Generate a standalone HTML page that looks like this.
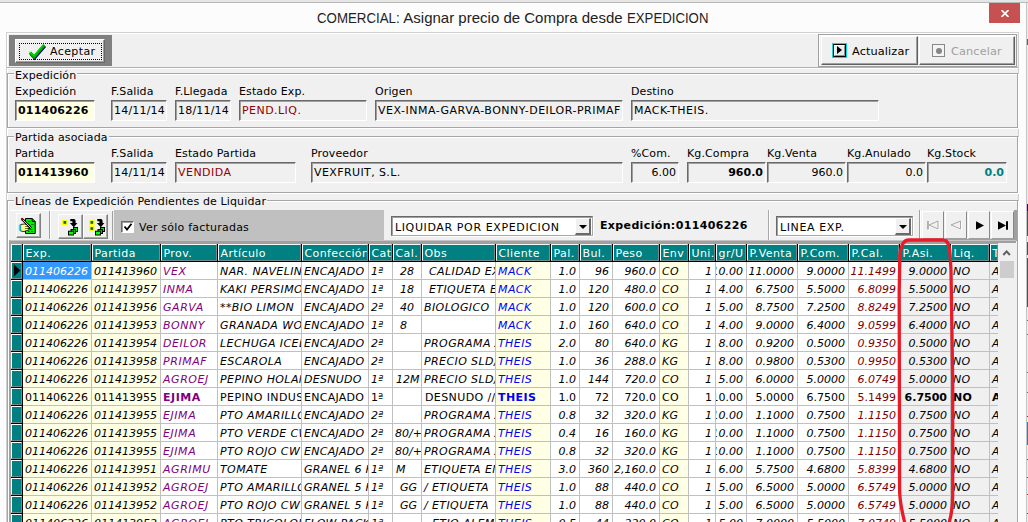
<!DOCTYPE html>
<html lang="es"><head><meta charset="utf-8"><title>COMERCIAL: Asignar precio de Compra desde EXPEDICION</title>
<style>
html,body{margin:0;padding:0}
body{width:1028px;height:522px;overflow:hidden;position:relative;background:#fcfcfc;font-family:"DejaVu Sans","Liberation Sans",sans-serif;font-size:11px;color:#000}
div,span{box-sizing:border-box}
.a{position:absolute}
.t{position:absolute;white-space:pre;line-height:14px;height:14px;letter-spacing:0.12px}
.fld{position:absolute;height:21px;background:#f0f0f0;border:1px solid;border-color:#696969 #fff #fff #696969;box-shadow:inset 1px 1px 0 #a0a0a0;white-space:pre;overflow:hidden;line-height:17px;padding:1px 0 0 2px}
.fld.y{background:#ffffe1;font-weight:bold;padding-left:2px;letter-spacing:0.2px}
.fld.r{text-align:right;padding-right:2px}
.grp{position:absolute;border:1px solid #a6a6a6;box-shadow:1px 1px 0 #fff, inset 1px 1px 0 #fff}
.cap{position:absolute;background:#f0f0f0;line-height:14px;height:14px;white-space:pre;letter-spacing:0.12px}
.btn{position:absolute;background:#f0f0f0;border:1px solid;border-color:#fff #696969 #696969 #fff;box-shadow:inset -1px -1px 0 #a0a0a0}
.hc{position:absolute;top:244px;height:17px;background:#008080;color:#fff;border-left:1px solid #f0f8f8;border-top:1px solid #f0f8f8;border-right:1px solid #708c8c;border-bottom:1px solid #708c8c;white-space:pre;overflow:hidden;line-height:15px;padding-left:1.5px;padding-top:1px;letter-spacing:0.4px}
.ri{position:absolute;left:11px;width:11px;height:17px;background:#008080;border-left:1px solid #fff;border-top:1px solid #fff;border-right:1px solid #708c8c;border-bottom:1px solid #708c8c}
.c{position:absolute;height:17px;line-height:17px;padding-top:1px;white-space:pre;overflow:hidden;font-style:italic;padding-left:2px;display:flex}
.c.r{justify-content:flex-end;padding-left:0;padding-right:3px}
.c.n{font-style:normal}
.c.b{font-weight:bold}
</style></head><body>

<div class="a" style="left:0;top:0;width:1028px;height:2px;background:#e6e6e6"></div>
<div class="a" style="left:0;top:2px;width:1028px;height:1px;background:#b9b9b9"></div>
<div class="a" style="left:1026px;top:3px;width:1px;height:519px;background:#c4c4c4"></div><div class="a" style="left:1027px;top:3px;width:1px;height:519px;background:#ececec"></div>
<div class="a" style="left:317px;top:6px;height:24px;line-height:24px;font-family:'Liberation Sans',sans-serif;font-size:15px;color:#222;white-space:pre"><span class="a" style="left:0;top:0;transform-origin:0 0;transform:scaleX(0.885)">COMERCIAL:</span><span class="a" style="left:83px;top:0"> Asignar precio de Compra desde </span><span class="a" style="left:310px;top:0;transform-origin:0 0;transform:scaleX(0.88)">EXPEDICION</span></div>
<div class="a" style="left:989px;top:3px;width:31px;height:20px;background:#c75050"><svg class="a" style="left:12px;top:7px" width="8" height="7" viewBox="0 0 8 7"><path d="M0.500 0 L7.500 7 M7.500 0 L0.500 7" stroke="#fff" stroke-width="1.700" fill="none"/></svg></div>
<div class="a" style="left:6px;top:32px;width:1013px;height:490px;background:#f0f0f0;border-left:1px solid #d0d0d0;border-top:1px solid #d0d0d0;border-right:1px solid #d0d0d0;box-shadow:inset 1px 1px 0 #fff"></div>
<div class="a" style="left:7px;top:67px;width:1011px;height:1px;background:#b0b0b0"></div>
<div class="a" style="left:7px;top:68px;width:1011px;height:1px;background:#fff"></div>
<div class="a" style="left:9px;top:35px;width:103px;height:31px;background:#808080"></div>
<div class="btn" style="left:15px;top:39px;width:90px;height:24px;border-color:#fff #696969 #696969 #fff"></div>
<div class="a" style="left:19px;top:43px;width:83px;height:17px;border:1px dotted #000"></div>
<svg class="a" style="left:28px;top:42px" width="20" height="20" viewBox="0 0 20 20"><path d="M2.600 11.400 L6.500 15.900 L16.900 3.900" stroke="#000080" stroke-width="3" fill="none"/><path d="M2 10.500 L6 15 L16.200 3" stroke="#00a800" stroke-width="3" fill="none"/><path d="M1.500 10 L6 13.800 L15.500 2.500" stroke="#00f000" stroke-width="1" fill="none"/></svg>
<div class="t" style="left:50px;top:45px;font-size:11px;letter-spacing:0.4px">Aceptar</div>
<div class="a" style="left:818px;top:34px;width:199px;height:33px;border:1px solid #a0a0a0;box-shadow:inset 1px 1px 0 #fff"></div>
<div class="btn" style="left:821px;top:36px;width:97px;height:29px;border-width:1px;border-color:#fff #606060 #606060 #fff;box-shadow:inset -1px -1px 0 #a0a0a0"></div>
<div class="btn" style="left:919px;top:36px;width:96px;height:29px;border-width:1px;border-color:#fff #606060 #606060 #fff;box-shadow:inset -1px -1px 0 #a0a0a0"></div>
<div class="a" style="left:832px;top:43px;width:15px;height:15px;border:1px solid #00e0e0;background:#000"><div class="a" style="left:1px;top:1px;width:11px;height:11px;background:#ececec;border:1px solid;border-color:#fff #909090 #909090 #fff"></div><div class="a" style="left:4px;top:2px;width:0;height:0;border-left:5px solid #000;border-top:4.5px solid transparent;border-bottom:4.5px solid transparent"></div></div>
<div class="t" style="left:852px;top:45px;font-size:11.3px">Actualizar</div>
<div class="a" style="left:932px;top:44px;width:13px;height:13px;border:1px solid #888;background:#f4f4f4"><div class="a" style="left:2.500px;top:2.500px;width:6px;height:6px;border-radius:3px;background:#858585"></div></div>
<div class="t" style="left:951px;top:45px;font-size:11.3px;color:#a0a0a0">Cancelar</div>
<div class="grp" style="left:7px;top:73px;width:1011px;height:55px"></div>
<div class="cap" style="left:14px;top:69px;padding:0 1px">Expedición</div>
<div class="t" style="left:15px;top:85px">Expedición</div>
<div class="t" style="left:111px;top:85px">F.Salida</div>
<div class="t" style="left:175px;top:85px">F.Llegada</div>
<div class="t" style="left:239px;top:85px">Estado Exp.</div>
<div class="t" style="left:375px;top:85px">Origen</div>
<div class="t" style="left:631px;top:85px">Destino</div>
<div class="fld y" style="left:15px;top:100px;width:80px">011406226</div>
<div class="fld" style="left:111px;top:100px;width:56px;padding-left:2px;letter-spacing:0.2px">14/11/14</div>
<div class="fld" style="left:175px;top:100px;width:56px;padding-left:2px;letter-spacing:0.2px">18/11/14</div>
<div class="fld" style="left:239px;top:100px;width:128px;color:#900000;letter-spacing:0.45px">PEND.LIQ.</div>
<div class="fld" style="left:375px;top:100px;width:248px;letter-spacing:0.5px">VEX-INMA-GARVA-BONNY-DEILOR-PRIMAF</div>
<div class="fld" style="left:631px;top:100px;width:248px;letter-spacing:0.5px">MACK-THEIS.</div>
<div class="grp" style="left:7px;top:136px;width:1011px;height:57px"></div>
<div class="cap" style="left:14px;top:131px;padding:0 1px">Partida asociada</div>
<div class="t" style="left:15px;top:147px">Partida</div>
<div class="t" style="left:111px;top:147px">F.Salida</div>
<div class="t" style="left:175px;top:147px">Estado Partida</div>
<div class="t" style="left:311px;top:147px">Proveedor</div>
<div class="t" style="left:631px;top:147px">%Com.</div>
<div class="t" style="left:687px;top:147px">Kg.Compra</div>
<div class="t" style="left:767px;top:147px">Kg.Venta</div>
<div class="t" style="left:847px;top:147px">Kg.Anulado</div>
<div class="t" style="left:927px;top:147px">Kg.Stock</div>
<div class="fld y" style="left:15px;top:162px;width:80px">011413960</div>
<div class="fld" style="left:111px;top:162px;width:56px;padding-left:2px;letter-spacing:0.2px">14/11/14</div>
<div class="fld" style="left:175px;top:162px;width:121px;color:#900000;letter-spacing:0.45px">VENDIDA</div>
<div class="fld" style="left:311px;top:162px;width:312px;letter-spacing:0.4px">VEXFRUIT, S.L.</div>
<div class="fld r" style="left:631px;top:162px;width:48px">6.00</div>
<div class="fld r" style="left:687px;top:162px;width:79px;font-weight:bold">960.0</div>
<div class="fld r" style="left:767px;top:162px;width:79px">960.0</div>
<div class="fld r" style="left:847px;top:162px;width:79px">0.0</div>
<div class="fld r" style="left:927px;top:162px;width:80px;font-weight:bold;color:#008080">0.0</div>
<div class="grp" style="left:7px;top:200px;width:1011px;height:330px"></div>
<div class="cap" style="left:14px;top:195px;padding:0 1px;letter-spacing:0.13px">Líneas de Expedición Pendientes de Liquidar</div>
<div class="a" style="left:10px;top:210px;width:103px;height:1px;background:#fff"></div><div class="a" style="left:112px;top:211px;width:1px;height:29px;background:#a0a0a0"></div>
<div class="a" style="left:113.500px;top:210px;width:270px;height:30px;background:#c0c0c0"></div>
<div class="a" style="left:49px;top:211px;width:1px;height:28px;background:#a0a0a0"></div><div class="a" style="left:50px;top:211px;width:1px;height:28px;background:#fff"></div>
<div class="btn" style="left:16px;top:213px;width:25px;height:25px;border-width:1px;border-color:#fff #808080 #808080 #fff;box-shadow:inset -1px -1px 0 #a8a8a8"></div>
<div class="btn" style="left:58px;top:214px;width:25px;height:25px;border-width:1px;border-color:#fff #808080 #808080 #fff;box-shadow:inset -1px -1px 0 #a8a8a8"></div>
<div class="btn" style="left:83px;top:214px;width:25px;height:25px;border-width:1px;border-color:#fff #808080 #808080 #fff;box-shadow:inset -1px -1px 0 #a8a8a8"></div>
<svg class="a" style="left:18px;top:216px" width="19" height="19" viewBox="0 0 19 19"><path d="M7.500 2.500 H14.200 L17.200 5.500 V17.500 H7.500 Z" fill="#00f000" stroke="#000" stroke-width="1"/><path d="M14.200 2.500 V5.500 H17.200" fill="none" stroke="#000" stroke-width="1"/><path d="M10 5.500 H12.500 M13 8.500 H15.500 M12 13.500 H14.500 M10 15.500 H11.500 M13 15.500 H15" stroke="#007000" stroke-width="1"/><path d="M2.600 8.500 L6.500 8 L9 8.300 L11.800 9.300 L11.800 10.300 L9.500 10.600 L12 11.300 L12 12.300 L9.500 12.500 L11.200 13.200 L10.800 14.200 L8.600 14.500 L6 15.600 L2.600 15 Z" fill="#ffff88" stroke="#000" stroke-width="0.800"/><path d="M7 10.500 H9.500 M7 12.500 H9.500" stroke="#404000" stroke-width="0.700"/><rect x="0.800" y="8.600" width="1.800" height="6.200" fill="#00e8ff"/><path d="M3.600 2.600 L13 12" stroke="#000" stroke-width="2.400"/><path d="M4.600 3.600 L12.800 11.800" stroke="#f8e800" stroke-width="1"/><path d="M3.300 2.300 L4.800 3.800" stroke="#e00000" stroke-width="1.400"/></svg>
<svg class="a" style="left:61.8px;top:218px" width="18" height="18" viewBox="0 0 18 18"><rect x="0" y="1.700" width="5.500" height="5.300" fill="#ffff00"/><rect x="1.500" y="3" width="2.700" height="2.800" fill="#007000"/><path d="M8.300 1 H11.800 Q13.600 1 13.600 3 V5 H15.400 L11.800 9.200 L7.800 5 H10.400 V3.200 H8.300 Z" fill="#000"/><rect x="11.500" y="9.500" width="4" height="4" fill="#00e800" stroke="#000" stroke-width="1"/><rect x="9" y="11.500" width="4.500" height="4" fill="#00c000" stroke="#000" stroke-width="1"/><rect x="6.500" y="13.200" width="5" height="3.800" fill="#00ff00" stroke="#000" stroke-width="1"/></svg>
<svg class="a" style="left:88.8px;top:218px" width="18" height="18" viewBox="0 0 18 18"><rect x="0" y="1.700" width="5.500" height="5.300" fill="#ffff00"/><rect x="1.500" y="3" width="2.700" height="2.800" fill="#007000"/><rect x="0" y="8" width="5.500" height="5" fill="#ffff00"/><rect x="1.500" y="9.200" width="2.700" height="2.700" fill="#007000"/><path d="M8.300 1 H11.800 Q13.600 1 13.600 3 V5 H15.400 L11.800 9.200 L7.800 5 H10.400 V3.200 H8.300 Z" fill="#000"/><rect x="11.500" y="9.500" width="4" height="4" fill="#00e800" stroke="#000" stroke-width="1"/><rect x="9" y="11.500" width="4.500" height="4" fill="#00c000" stroke="#000" stroke-width="1"/><rect x="6.500" y="13.200" width="5" height="3.800" fill="#00ff00" stroke="#000" stroke-width="1"/></svg>
<div class="a" style="left:121px;top:221px;width:13px;height:12px;background:#fff;border:1px solid;border-color:#696969 #fff #fff #696969;box-shadow:inset 1px 1px 0 #a0a0a0"><svg class="a" style="left:1px;top:0px" width="10" height="10" viewBox="0 0 10 10"><path d="M1.5 4.5 L4 7.5 L8.5 1.8" stroke="#000" stroke-width="1.8" fill="none"/></svg></div>
<div class="t" style="left:139px;top:221px;letter-spacing:0.22px">Ver sólo facturadas</div>
<div class="a" style="left:391px;top:216px;width:202px;height:20px;background:#fff;border:1px solid;border-color:#696969 #a8a8a8 #a8a8a8 #696969;box-shadow:inset 1px 1px 0 #a0a0a0, 1px 1px 0 #fff;white-space:pre;line-height:17px;padding:2px 0 0 3px;letter-spacing:0.62px;overflow:hidden">LIQUIDAR POR EXPEDICION<div class="btn" style="right:1px;top:1px;width:16px;height:17px;border-width:1px 2px 2px 1px;box-shadow:none"><div class="a" style="left:3px;top:6px;width:0;height:0;border-top:4px solid #000;border-left:4px solid transparent;border-right:4px solid transparent"></div></div></div>
<div class="t" style="left:600px;top:219px;font-weight:bold;letter-spacing:0.36px">Expedición:011406226</div>
<div class="a" style="left:768px;top:210px;width:1px;height:30px;background:#a8a8a8"></div><div class="a" style="left:769px;top:210px;width:1px;height:30px;background:#fff"></div>
<div class="a" style="left:776px;top:216px;width:137px;height:20px;background:#fff;border:1px solid;border-color:#696969 #a8a8a8 #a8a8a8 #696969;box-shadow:inset 1px 1px 0 #a0a0a0, 1px 1px 0 #fff;white-space:pre;line-height:17px;padding:2px 0 0 3px;letter-spacing:0.62px;overflow:hidden">LINEA EXP.<div class="btn" style="right:1px;top:1px;width:16px;height:17px;border-width:1px 2px 2px 1px;box-shadow:none"><div class="a" style="left:3px;top:6px;width:0;height:0;border-top:4px solid #000;border-left:4px solid transparent;border-right:4px solid transparent"></div></div></div>
<div class="btn" style="left:922px;top:211px;width:22px;height:28px;border-width:1px;border-color:#fff #888 #a0a0a0 #fff;box-shadow:none"></div>
<div class="btn" style="left:945px;top:211px;width:22px;height:28px;border-width:1px;border-color:#fff #888 #a0a0a0 #fff;box-shadow:none"></div>
<div class="btn" style="left:968px;top:211px;width:22px;height:28px;border-width:1px;border-color:#fff #888 #a0a0a0 #fff;box-shadow:none"></div>
<div class="btn" style="left:991px;top:211px;width:23px;height:28px;border-width:1px;border-color:#fff #888 #a0a0a0 #fff;box-shadow:none"></div>
<div class="a" style="left:919px;top:210px;width:98px;height:31px;border-left:1px solid #a0a0a0;border-right:3px solid #a0a0a0;border-bottom:2px solid #a0a0a0"></div><div class="a" style="left:920px;top:210px;width:1px;height:29px;background:#fff"></div>
<svg class="a" style="left:921px;top:211px" width="94" height="28" viewBox="0 0 94 28"><path d="M8 11 V19.500" stroke="#fff" stroke-width="1.6"/><path d="M18 11 L9 15 L18 19 Z" fill="none" stroke="#fff" stroke-width="1"/><path d="M7 10 V18.500" stroke="#a0a0a0" stroke-width="1.6"/><path d="M17 10 L8 14 L17 18 Z" fill="#f0f0f0" stroke="#a8a8a8" stroke-width="1"/><path d="M40.500 11 L31 15 L40.500 19 Z" fill="none" stroke="#fff" stroke-width="1"/><path d="M39.500 10 L30 14 L39.500 18 Z" fill="#f0f0f0" stroke="#a8a8a8" stroke-width="1"/><path d="M55 10.200 L63 14.500 L55 18.800 Z" fill="#000"/><path d="M77 10.200 L85 14.500 L77 18.800 Z" fill="#000"/><path d="M86 10.200 V18.800" stroke="#000" stroke-width="2"/></svg>
<div class="a" style="left:9px;top:240px;width:1007px;height:290px;background:#fff;border-left:2px solid #a0a0a0;border-top:1px solid #c4c4c4"></div>
<div class="a" style="left:9px;top:241px;width:1007px;height:3px;background:#a0a0a0"></div>
<div class="a" style="left:11px;top:244px;width:987px;height:18px;background:#000"></div>
<div class="hc" style="left:11px;width:11px;padding:0"></div>
<div class="hc" style="left:23px;width:68px">Exp.</div>
<div class="hc" style="left:92px;width:68px">Partida</div>
<div class="hc" style="left:161px;width:56px">Prov.</div>
<div class="hc" style="left:218px;width:83px">Artículo</div>
<div class="hc" style="left:302px;width:66px">Confección</div>
<div class="hc" style="left:369px;width:23px">Cat</div>
<div class="hc" style="left:393px;width:28px">Cal.</div>
<div class="hc" style="left:422px;width:73px">Obs</div>
<div class="hc" style="left:496px;width:54px">Cliente</div>
<div class="hc" style="left:551px;width:28px">Pal.</div>
<div class="hc" style="left:580px;width:32px">Bul.</div>
<div class="hc" style="left:613px;width:46px">Peso</div>
<div class="hc" style="left:660px;width:28px">Env</div>
<div class="hc" style="left:689px;width:26px">Uni.</div>
<div class="hc" style="left:716px;width:30px">gr/U</div>
<div class="hc" style="left:747px;width:50px">P.Venta</div>
<div class="hc" style="left:798px;width:50px">P.Com.</div>
<div class="hc" style="left:849px;width:50px">P.Cal.</div>
<div class="hc" style="left:900px;width:50px">P.Asi.</div>
<div class="hc" style="left:951px;width:38px">Liq.</div>
<div class="hc" style="left:990px;width:8px">T</div>
<div class="a" style="left:11px;top:261px;width:12px;height:19px;background:#000"></div>
<div class="ri" style="top:262px"></div>
<div class="a" style="left:23px;top:279px;width:975px;height:1px;background:#c0c0c0"></div>
<div class="c" style="left:23px;top:262px;width:68px;background:#3399ff;color:#fff;"><span>011406226</span></div>
<div class="c" style="left:92px;top:262px;width:68px;background:#ffffe6;"><span>011413960</span></div>
<div class="c" style="left:161px;top:262px;width:56px;color:#800080;letter-spacing:0.55px;"><span>VEX</span></div>
<div class="c" style="left:218px;top:262px;width:83px;letter-spacing:0.4px;"><span>NAR. NAVELINA</span></div>
<div class="c" style="left:302px;top:262px;width:66px;letter-spacing:0.27px;"><span>ENCAJADO</span></div>
<div class="c" style="left:369px;top:262px;width:23px;"><span>1ª</span></div>
<div class="c" style="left:393px;top:262px;width:28px;padding-left:7px;"><span>28</span></div>
<div class="c" style="left:422px;top:262px;width:73px;padding-left:7px;letter-spacing:0.4px;"><span>CALIDAD EXTRA</span></div>
<div class="c" style="left:496px;top:262px;width:54px;background:#ffffe6;color:#0000ff;letter-spacing:0.4px;"><span>MACK</span></div>
<div class="c r" style="left:551px;top:262px;width:28px;"><span>1.0</span></div>
<div class="c r" style="left:580px;top:262px;width:32px;"><span>96</span></div>
<div class="c r" style="left:613px;top:262px;width:46px;"><span>960.0</span></div>
<div class="c" style="left:660px;top:262px;width:28px;background:#ffffe6;letter-spacing:0.3px;"><span>CO</span></div>
<div class="c r" style="left:689px;top:262px;width:26px;"><span>1</span></div>
<div class="c r" style="left:716px;top:262px;width:30px;"><span>10.00</span></div>
<div class="c r" style="left:747px;top:262px;width:50px;"><span>11.0000</span></div>
<div class="c r" style="left:798px;top:262px;width:50px;"><span>9.0000</span></div>
<div class="c r" style="left:849px;top:262px;width:50px;color:#800000;"><span>11.1499</span></div>
<div class="c r" style="left:900px;top:262px;width:50px;background:#f0f0f0;"><span>9.0000</span></div>
<div class="c" style="left:951px;top:262px;width:38px;background:#f0f0f0;letter-spacing:0.3px;"><span>NO</span></div>
<div class="c" style="left:990px;top:262px;width:8px;background:#f0f0f0;"><span>A</span></div>
<div class="a" style="left:11px;top:279px;width:12px;height:19px;background:#000"></div>
<div class="ri" style="top:280px"></div>
<div class="a" style="left:23px;top:297px;width:975px;height:1px;background:#c0c0c0"></div>
<div class="c" style="left:23px;top:280px;width:68px;background:#ffffe6;"><span>011406226</span></div>
<div class="c" style="left:92px;top:280px;width:68px;background:#ffffe6;"><span>011413957</span></div>
<div class="c" style="left:161px;top:280px;width:56px;color:#800080;letter-spacing:0.55px;"><span>INMA</span></div>
<div class="c" style="left:218px;top:280px;width:83px;letter-spacing:0.4px;"><span>KAKI PERSIMON</span></div>
<div class="c" style="left:302px;top:280px;width:66px;letter-spacing:0.27px;"><span>ENCAJADO</span></div>
<div class="c" style="left:369px;top:280px;width:23px;"><span>1ª</span></div>
<div class="c" style="left:393px;top:280px;width:28px;padding-left:7px;"><span>18</span></div>
<div class="c" style="left:422px;top:280px;width:73px;padding-left:7px;letter-spacing:0.4px;"><span>ETIQUETA EN</span></div>
<div class="c" style="left:496px;top:280px;width:54px;background:#ffffe6;color:#0000ff;letter-spacing:0.4px;"><span>MACK</span></div>
<div class="c r" style="left:551px;top:280px;width:28px;"><span>1.0</span></div>
<div class="c r" style="left:580px;top:280px;width:32px;"><span>120</span></div>
<div class="c r" style="left:613px;top:280px;width:46px;"><span>480.0</span></div>
<div class="c" style="left:660px;top:280px;width:28px;background:#ffffe6;letter-spacing:0.3px;"><span>CO</span></div>
<div class="c r" style="left:689px;top:280px;width:26px;"><span>1</span></div>
<div class="c r" style="left:716px;top:280px;width:30px;"><span>4.00</span></div>
<div class="c r" style="left:747px;top:280px;width:50px;"><span>6.7500</span></div>
<div class="c r" style="left:798px;top:280px;width:50px;"><span>5.5000</span></div>
<div class="c r" style="left:849px;top:280px;width:50px;color:#800000;"><span>6.8099</span></div>
<div class="c r" style="left:900px;top:280px;width:50px;background:#f0f0f0;"><span>5.5000</span></div>
<div class="c" style="left:951px;top:280px;width:38px;background:#f0f0f0;letter-spacing:0.3px;"><span>NO</span></div>
<div class="c" style="left:990px;top:280px;width:8px;background:#f0f0f0;"><span>A</span></div>
<div class="a" style="left:11px;top:297px;width:12px;height:19px;background:#000"></div>
<div class="ri" style="top:298px"></div>
<div class="a" style="left:23px;top:315px;width:975px;height:1px;background:#c0c0c0"></div>
<div class="c" style="left:23px;top:298px;width:68px;background:#ffffe6;"><span>011406226</span></div>
<div class="c" style="left:92px;top:298px;width:68px;background:#ffffe6;"><span>011413956</span></div>
<div class="c" style="left:161px;top:298px;width:56px;color:#800080;letter-spacing:0.55px;"><span>GARVA</span></div>
<div class="c" style="left:218px;top:298px;width:83px;letter-spacing:0.4px;"><span>**BIO LIMON</span></div>
<div class="c" style="left:302px;top:298px;width:66px;letter-spacing:0.27px;"><span>ENCAJADO</span></div>
<div class="c" style="left:369px;top:298px;width:23px;"><span>2ª</span></div>
<div class="c" style="left:393px;top:298px;width:28px;padding-left:7px;"><span>40</span></div>
<div class="c" style="left:422px;top:298px;width:73px;letter-spacing:0.4px;"><span>BIOLOGICO</span></div>
<div class="c" style="left:496px;top:298px;width:54px;background:#ffffe6;color:#0000ff;letter-spacing:0.4px;"><span>MACK</span></div>
<div class="c r" style="left:551px;top:298px;width:28px;"><span>1.0</span></div>
<div class="c r" style="left:580px;top:298px;width:32px;"><span>120</span></div>
<div class="c r" style="left:613px;top:298px;width:46px;"><span>600.0</span></div>
<div class="c" style="left:660px;top:298px;width:28px;background:#ffffe6;letter-spacing:0.3px;"><span>CO</span></div>
<div class="c r" style="left:689px;top:298px;width:26px;"><span>1</span></div>
<div class="c r" style="left:716px;top:298px;width:30px;"><span>5.00</span></div>
<div class="c r" style="left:747px;top:298px;width:50px;"><span>8.7500</span></div>
<div class="c r" style="left:798px;top:298px;width:50px;"><span>7.2500</span></div>
<div class="c r" style="left:849px;top:298px;width:50px;color:#800000;"><span>8.8249</span></div>
<div class="c r" style="left:900px;top:298px;width:50px;background:#f0f0f0;"><span>7.2500</span></div>
<div class="c" style="left:951px;top:298px;width:38px;background:#f0f0f0;letter-spacing:0.3px;"><span>NO</span></div>
<div class="c" style="left:990px;top:298px;width:8px;background:#f0f0f0;"><span>A</span></div>
<div class="a" style="left:11px;top:315px;width:12px;height:19px;background:#000"></div>
<div class="ri" style="top:316px"></div>
<div class="a" style="left:23px;top:333px;width:975px;height:1px;background:#c0c0c0"></div>
<div class="c" style="left:23px;top:316px;width:68px;background:#ffffe6;"><span>011406226</span></div>
<div class="c" style="left:92px;top:316px;width:68px;background:#ffffe6;"><span>011413953</span></div>
<div class="c" style="left:161px;top:316px;width:56px;color:#800080;letter-spacing:0.55px;"><span>BONNY</span></div>
<div class="c" style="left:218px;top:316px;width:83px;letter-spacing:0.4px;"><span>GRANADA WONDERFUL</span></div>
<div class="c" style="left:302px;top:316px;width:66px;letter-spacing:0.27px;"><span>ENCAJADO</span></div>
<div class="c" style="left:369px;top:316px;width:23px;"><span>1ª</span></div>
<div class="c" style="left:393px;top:316px;width:28px;padding-left:7px;"><span>8</span></div>
<div class="c" style="left:422px;top:316px;width:73px;letter-spacing:0.4px;"><span></span></div>
<div class="c" style="left:496px;top:316px;width:54px;background:#ffffe6;color:#0000ff;letter-spacing:0.4px;"><span>MACK</span></div>
<div class="c r" style="left:551px;top:316px;width:28px;"><span>1.0</span></div>
<div class="c r" style="left:580px;top:316px;width:32px;"><span>160</span></div>
<div class="c r" style="left:613px;top:316px;width:46px;"><span>640.0</span></div>
<div class="c" style="left:660px;top:316px;width:28px;background:#ffffe6;letter-spacing:0.3px;"><span>CO</span></div>
<div class="c r" style="left:689px;top:316px;width:26px;"><span>1</span></div>
<div class="c r" style="left:716px;top:316px;width:30px;"><span>4.00</span></div>
<div class="c r" style="left:747px;top:316px;width:50px;"><span>9.0000</span></div>
<div class="c r" style="left:798px;top:316px;width:50px;"><span>6.4000</span></div>
<div class="c r" style="left:849px;top:316px;width:50px;color:#800000;"><span>9.0599</span></div>
<div class="c r" style="left:900px;top:316px;width:50px;background:#f0f0f0;"><span>6.4000</span></div>
<div class="c" style="left:951px;top:316px;width:38px;background:#f0f0f0;letter-spacing:0.3px;"><span>NO</span></div>
<div class="c" style="left:990px;top:316px;width:8px;background:#f0f0f0;"><span>A</span></div>
<div class="a" style="left:11px;top:333px;width:12px;height:19px;background:#000"></div>
<div class="ri" style="top:334px"></div>
<div class="a" style="left:23px;top:351px;width:975px;height:1px;background:#c0c0c0"></div>
<div class="c" style="left:23px;top:334px;width:68px;background:#ffffe6;"><span>011406226</span></div>
<div class="c" style="left:92px;top:334px;width:68px;background:#ffffe6;"><span>011413954</span></div>
<div class="c" style="left:161px;top:334px;width:56px;color:#800080;letter-spacing:0.55px;"><span>DEILOR</span></div>
<div class="c" style="left:218px;top:334px;width:83px;letter-spacing:0.4px;"><span>LECHUGA ICEBERG</span></div>
<div class="c" style="left:302px;top:334px;width:66px;letter-spacing:0.27px;"><span>ENCAJADO</span></div>
<div class="c" style="left:369px;top:334px;width:23px;"><span>2ª</span></div>
<div class="c" style="left:393px;top:334px;width:28px;"><span></span></div>
<div class="c" style="left:422px;top:334px;width:73px;letter-spacing:0.4px;"><span>PROGRAMA<span style="margin-left:2.600px">.</span></span></div>
<div class="c" style="left:496px;top:334px;width:54px;background:#ffffe6;color:#0000ff;letter-spacing:0.4px;"><span>THEIS</span></div>
<div class="c r" style="left:551px;top:334px;width:28px;"><span>2.0</span></div>
<div class="c r" style="left:580px;top:334px;width:32px;"><span>80</span></div>
<div class="c r" style="left:613px;top:334px;width:46px;"><span>640.0</span></div>
<div class="c" style="left:660px;top:334px;width:28px;background:#ffffe6;letter-spacing:0.3px;"><span>KG</span></div>
<div class="c r" style="left:689px;top:334px;width:26px;"><span>1</span></div>
<div class="c r" style="left:716px;top:334px;width:30px;"><span>8.00</span></div>
<div class="c r" style="left:747px;top:334px;width:50px;"><span>0.9200</span></div>
<div class="c r" style="left:798px;top:334px;width:50px;"><span>0.5000</span></div>
<div class="c r" style="left:849px;top:334px;width:50px;color:#800000;"><span>0.9350</span></div>
<div class="c r" style="left:900px;top:334px;width:50px;background:#f0f0f0;"><span>0.5000</span></div>
<div class="c" style="left:951px;top:334px;width:38px;background:#f0f0f0;letter-spacing:0.3px;"><span>NO</span></div>
<div class="c" style="left:990px;top:334px;width:8px;background:#f0f0f0;"><span>A</span></div>
<div class="a" style="left:11px;top:351px;width:12px;height:19px;background:#000"></div>
<div class="ri" style="top:352px"></div>
<div class="a" style="left:23px;top:369px;width:975px;height:1px;background:#c0c0c0"></div>
<div class="c" style="left:23px;top:352px;width:68px;background:#ffffe6;"><span>011406226</span></div>
<div class="c" style="left:92px;top:352px;width:68px;background:#ffffe6;"><span>011413958</span></div>
<div class="c" style="left:161px;top:352px;width:56px;color:#800080;letter-spacing:0.55px;"><span>PRIMAF</span></div>
<div class="c" style="left:218px;top:352px;width:83px;letter-spacing:0.4px;"><span>ESCAROLA</span></div>
<div class="c" style="left:302px;top:352px;width:66px;letter-spacing:0.27px;"><span>ENCAJADO</span></div>
<div class="c" style="left:369px;top:352px;width:23px;"><span>2ª</span></div>
<div class="c" style="left:393px;top:352px;width:28px;"><span></span></div>
<div class="c" style="left:422px;top:352px;width:73px;letter-spacing:0.4px;"><span>PRECIO SLD/</span></div>
<div class="c" style="left:496px;top:352px;width:54px;background:#ffffe6;color:#0000ff;letter-spacing:0.4px;"><span>THEIS</span></div>
<div class="c r" style="left:551px;top:352px;width:28px;"><span>1.0</span></div>
<div class="c r" style="left:580px;top:352px;width:32px;"><span>36</span></div>
<div class="c r" style="left:613px;top:352px;width:46px;"><span>288.0</span></div>
<div class="c" style="left:660px;top:352px;width:28px;background:#ffffe6;letter-spacing:0.3px;"><span>KG</span></div>
<div class="c r" style="left:689px;top:352px;width:26px;"><span>1</span></div>
<div class="c r" style="left:716px;top:352px;width:30px;"><span>8.00</span></div>
<div class="c r" style="left:747px;top:352px;width:50px;"><span>0.9800</span></div>
<div class="c r" style="left:798px;top:352px;width:50px;"><span>0.5300</span></div>
<div class="c r" style="left:849px;top:352px;width:50px;color:#800000;"><span>0.9950</span></div>
<div class="c r" style="left:900px;top:352px;width:50px;background:#f0f0f0;"><span>0.5300</span></div>
<div class="c" style="left:951px;top:352px;width:38px;background:#f0f0f0;letter-spacing:0.3px;"><span>NO</span></div>
<div class="c" style="left:990px;top:352px;width:8px;background:#f0f0f0;"><span>A</span></div>
<div class="a" style="left:11px;top:369px;width:12px;height:19px;background:#000"></div>
<div class="ri" style="top:370px"></div>
<div class="a" style="left:23px;top:387px;width:975px;height:1px;background:#c0c0c0"></div>
<div class="c" style="left:23px;top:370px;width:68px;background:#ffffe6;"><span>011406226</span></div>
<div class="c" style="left:92px;top:370px;width:68px;background:#ffffe6;"><span>011413952</span></div>
<div class="c" style="left:161px;top:370px;width:56px;color:#800080;letter-spacing:0.55px;"><span>AGROEJ</span></div>
<div class="c" style="left:218px;top:370px;width:83px;letter-spacing:0.4px;"><span>PEPINO HOLANDES</span></div>
<div class="c" style="left:302px;top:370px;width:66px;letter-spacing:0.27px;"><span>DESNUDO</span></div>
<div class="c" style="left:369px;top:370px;width:23px;"><span>1ª</span></div>
<div class="c" style="left:393px;top:370px;width:28px;padding-left:3px;"><span>12M</span></div>
<div class="c" style="left:422px;top:370px;width:73px;letter-spacing:0.4px;"><span>PRECIO SLD/</span></div>
<div class="c" style="left:496px;top:370px;width:54px;background:#ffffe6;color:#0000ff;letter-spacing:0.4px;"><span>THEIS</span></div>
<div class="c r" style="left:551px;top:370px;width:28px;"><span>1.0</span></div>
<div class="c r" style="left:580px;top:370px;width:32px;"><span>144</span></div>
<div class="c r" style="left:613px;top:370px;width:46px;"><span>720.0</span></div>
<div class="c" style="left:660px;top:370px;width:28px;background:#ffffe6;letter-spacing:0.3px;"><span>CO</span></div>
<div class="c r" style="left:689px;top:370px;width:26px;"><span>1</span></div>
<div class="c r" style="left:716px;top:370px;width:30px;"><span>5.00</span></div>
<div class="c r" style="left:747px;top:370px;width:50px;"><span>6.0000</span></div>
<div class="c r" style="left:798px;top:370px;width:50px;"><span>5.0000</span></div>
<div class="c r" style="left:849px;top:370px;width:50px;color:#800000;"><span>6.0749</span></div>
<div class="c r" style="left:900px;top:370px;width:50px;background:#f0f0f0;"><span>5.0000</span></div>
<div class="c" style="left:951px;top:370px;width:38px;background:#f0f0f0;letter-spacing:0.3px;"><span>NO</span></div>
<div class="c" style="left:990px;top:370px;width:8px;background:#f0f0f0;"><span>A</span></div>
<div class="a" style="left:11px;top:387px;width:12px;height:19px;background:#000"></div>
<div class="ri" style="top:388px"></div>
<div class="a" style="left:23px;top:405px;width:975px;height:1px;background:#c0c0c0"></div>
<div class="c n" style="left:23px;top:388px;width:68px;background:#ffffe6;"><span>011406226</span></div>
<div class="c n" style="left:92px;top:388px;width:68px;background:#ffffe6;"><span>011413955</span></div>
<div class="c n b" style="left:161px;top:388px;width:56px;color:#800080;letter-spacing:0.55px;"><span>EJIMA</span></div>
<div class="c n" style="left:218px;top:388px;width:83px;letter-spacing:0.4px;"><span>PEPINO INDUSTRIA</span></div>
<div class="c n" style="left:302px;top:388px;width:66px;letter-spacing:0.27px;"><span>ENCAJADO</span></div>
<div class="c n" style="left:369px;top:388px;width:23px;"><span>1ª</span></div>
<div class="c n" style="left:393px;top:388px;width:28px;"><span></span></div>
<div class="c n" style="left:422px;top:388px;width:73px;padding-left:3px;letter-spacing:0.4px;"><span>DESNUDO // X</span></div>
<div class="c n b" style="left:496px;top:388px;width:54px;background:#ffffe6;color:#0000ff;letter-spacing:0.4px;"><span>THEIS</span></div>
<div class="c r n" style="left:551px;top:388px;width:28px;"><span>1.0</span></div>
<div class="c r n" style="left:580px;top:388px;width:32px;"><span>72</span></div>
<div class="c r n" style="left:613px;top:388px;width:46px;"><span>720.0</span></div>
<div class="c n" style="left:660px;top:388px;width:28px;background:#ffffe6;letter-spacing:0.3px;"><span>CO</span></div>
<div class="c r n" style="left:689px;top:388px;width:26px;"><span>1</span></div>
<div class="c r n" style="left:716px;top:388px;width:30px;"><span>10.00</span></div>
<div class="c r n" style="left:747px;top:388px;width:50px;"><span>5.0000</span></div>
<div class="c r n" style="left:798px;top:388px;width:50px;"><span>6.7500</span></div>
<div class="c r n" style="left:849px;top:388px;width:50px;color:#800000;"><span>5.1499</span></div>
<div class="c r n b" style="left:900px;top:388px;width:50px;background:#f0f0f0;"><span>6.7500</span></div>
<div class="c n b" style="left:951px;top:388px;width:38px;background:#f0f0f0;letter-spacing:0.3px;"><span>NO</span></div>
<div class="c n b" style="left:990px;top:388px;width:8px;background:#f0f0f0;"><span>A</span></div>
<div class="a" style="left:11px;top:405px;width:12px;height:19px;background:#000"></div>
<div class="ri" style="top:406px"></div>
<div class="a" style="left:23px;top:423px;width:975px;height:1px;background:#c0c0c0"></div>
<div class="c" style="left:23px;top:406px;width:68px;background:#ffffe6;"><span>011406226</span></div>
<div class="c" style="left:92px;top:406px;width:68px;background:#ffffe6;"><span>011413955</span></div>
<div class="c" style="left:161px;top:406px;width:56px;color:#800080;letter-spacing:0.55px;"><span>EJIMA</span></div>
<div class="c" style="left:218px;top:406px;width:83px;letter-spacing:0.4px;"><span>PTO AMARILLO CW</span></div>
<div class="c" style="left:302px;top:406px;width:66px;letter-spacing:0.27px;"><span>ENCAJADO</span></div>
<div class="c" style="left:369px;top:406px;width:23px;"><span>2ª</span></div>
<div class="c" style="left:393px;top:406px;width:28px;"><span></span></div>
<div class="c" style="left:422px;top:406px;width:73px;letter-spacing:0.4px;"><span>PROGRAMA<span style="margin-left:2.600px">.</span></span></div>
<div class="c" style="left:496px;top:406px;width:54px;background:#ffffe6;color:#0000ff;letter-spacing:0.4px;"><span>THEIS</span></div>
<div class="c r" style="left:551px;top:406px;width:28px;"><span>0.8</span></div>
<div class="c r" style="left:580px;top:406px;width:32px;"><span>32</span></div>
<div class="c r" style="left:613px;top:406px;width:46px;"><span>320.0</span></div>
<div class="c" style="left:660px;top:406px;width:28px;background:#ffffe6;letter-spacing:0.3px;"><span>KG</span></div>
<div class="c r" style="left:689px;top:406px;width:26px;"><span>1</span></div>
<div class="c r" style="left:716px;top:406px;width:30px;"><span>10.00</span></div>
<div class="c r" style="left:747px;top:406px;width:50px;"><span>1.1000</span></div>
<div class="c r" style="left:798px;top:406px;width:50px;"><span>0.7500</span></div>
<div class="c r" style="left:849px;top:406px;width:50px;color:#800000;"><span>1.1150</span></div>
<div class="c r" style="left:900px;top:406px;width:50px;background:#f0f0f0;"><span>0.7500</span></div>
<div class="c" style="left:951px;top:406px;width:38px;background:#f0f0f0;letter-spacing:0.3px;"><span>NO</span></div>
<div class="c" style="left:990px;top:406px;width:8px;background:#f0f0f0;"><span>A</span></div>
<div class="a" style="left:11px;top:423px;width:12px;height:19px;background:#000"></div>
<div class="ri" style="top:424px"></div>
<div class="a" style="left:23px;top:441px;width:975px;height:1px;background:#c0c0c0"></div>
<div class="c" style="left:23px;top:424px;width:68px;background:#ffffe6;"><span>011406226</span></div>
<div class="c" style="left:92px;top:424px;width:68px;background:#ffffe6;"><span>011413955</span></div>
<div class="c" style="left:161px;top:424px;width:56px;color:#800080;letter-spacing:0.55px;"><span>EJIMA</span></div>
<div class="c" style="left:218px;top:424px;width:83px;letter-spacing:0.4px;"><span>PTO VERDE CW</span></div>
<div class="c" style="left:302px;top:424px;width:66px;letter-spacing:0.27px;"><span>ENCAJADO</span></div>
<div class="c" style="left:369px;top:424px;width:23px;"><span>2ª</span></div>
<div class="c" style="left:393px;top:424px;width:28px;padding-left:2px;"><span>80/+</span></div>
<div class="c" style="left:422px;top:424px;width:73px;letter-spacing:0.4px;"><span>PROGRAMA<span style="margin-left:2.600px">.</span></span></div>
<div class="c" style="left:496px;top:424px;width:54px;background:#ffffe6;color:#0000ff;letter-spacing:0.4px;"><span>THEIS</span></div>
<div class="c r" style="left:551px;top:424px;width:28px;"><span>0.4</span></div>
<div class="c r" style="left:580px;top:424px;width:32px;"><span>16</span></div>
<div class="c r" style="left:613px;top:424px;width:46px;"><span>160.0</span></div>
<div class="c" style="left:660px;top:424px;width:28px;background:#ffffe6;letter-spacing:0.3px;"><span>KG</span></div>
<div class="c r" style="left:689px;top:424px;width:26px;"><span>1</span></div>
<div class="c r" style="left:716px;top:424px;width:30px;"><span>10.00</span></div>
<div class="c r" style="left:747px;top:424px;width:50px;"><span>1.1000</span></div>
<div class="c r" style="left:798px;top:424px;width:50px;"><span>0.7500</span></div>
<div class="c r" style="left:849px;top:424px;width:50px;color:#800000;"><span>1.1150</span></div>
<div class="c r" style="left:900px;top:424px;width:50px;background:#f0f0f0;"><span>0.7500</span></div>
<div class="c" style="left:951px;top:424px;width:38px;background:#f0f0f0;letter-spacing:0.3px;"><span>NO</span></div>
<div class="c" style="left:990px;top:424px;width:8px;background:#f0f0f0;"><span>A</span></div>
<div class="a" style="left:11px;top:441px;width:12px;height:19px;background:#000"></div>
<div class="ri" style="top:442px"></div>
<div class="a" style="left:23px;top:459px;width:975px;height:1px;background:#c0c0c0"></div>
<div class="c" style="left:23px;top:442px;width:68px;background:#ffffe6;"><span>011406226</span></div>
<div class="c" style="left:92px;top:442px;width:68px;background:#ffffe6;"><span>011413955</span></div>
<div class="c" style="left:161px;top:442px;width:56px;color:#800080;letter-spacing:0.55px;"><span>EJIMA</span></div>
<div class="c" style="left:218px;top:442px;width:83px;letter-spacing:0.4px;"><span>PTO ROJO CW</span></div>
<div class="c" style="left:302px;top:442px;width:66px;letter-spacing:0.27px;"><span>ENCAJADO</span></div>
<div class="c" style="left:369px;top:442px;width:23px;"><span>2ª</span></div>
<div class="c" style="left:393px;top:442px;width:28px;padding-left:2px;"><span>80/+</span></div>
<div class="c" style="left:422px;top:442px;width:73px;letter-spacing:0.4px;"><span>PROGRAMA<span style="margin-left:2.600px">.</span></span></div>
<div class="c" style="left:496px;top:442px;width:54px;background:#ffffe6;color:#0000ff;letter-spacing:0.4px;"><span>THEIS</span></div>
<div class="c r" style="left:551px;top:442px;width:28px;"><span>0.8</span></div>
<div class="c r" style="left:580px;top:442px;width:32px;"><span>32</span></div>
<div class="c r" style="left:613px;top:442px;width:46px;"><span>320.0</span></div>
<div class="c" style="left:660px;top:442px;width:28px;background:#ffffe6;letter-spacing:0.3px;"><span>KG</span></div>
<div class="c r" style="left:689px;top:442px;width:26px;"><span>1</span></div>
<div class="c r" style="left:716px;top:442px;width:30px;"><span>10.00</span></div>
<div class="c r" style="left:747px;top:442px;width:50px;"><span>1.1000</span></div>
<div class="c r" style="left:798px;top:442px;width:50px;"><span>0.7500</span></div>
<div class="c r" style="left:849px;top:442px;width:50px;color:#800000;"><span>1.1150</span></div>
<div class="c r" style="left:900px;top:442px;width:50px;background:#f0f0f0;"><span>0.7500</span></div>
<div class="c" style="left:951px;top:442px;width:38px;background:#f0f0f0;letter-spacing:0.3px;"><span>NO</span></div>
<div class="c" style="left:990px;top:442px;width:8px;background:#f0f0f0;"><span>A</span></div>
<div class="a" style="left:11px;top:459px;width:12px;height:19px;background:#000"></div>
<div class="ri" style="top:460px"></div>
<div class="a" style="left:23px;top:477px;width:975px;height:1px;background:#c0c0c0"></div>
<div class="c" style="left:23px;top:460px;width:68px;background:#ffffe6;"><span>011406226</span></div>
<div class="c" style="left:92px;top:460px;width:68px;background:#ffffe6;"><span>011413951</span></div>
<div class="c" style="left:161px;top:460px;width:56px;color:#800080;letter-spacing:0.55px;"><span>AGRIMU</span></div>
<div class="c" style="left:218px;top:460px;width:83px;letter-spacing:0.4px;"><span>TOMATE</span></div>
<div class="c" style="left:302px;top:460px;width:66px;letter-spacing:0.27px;"><span>GRANEL 6 KG</span></div>
<div class="c" style="left:369px;top:460px;width:23px;"><span>1ª</span></div>
<div class="c" style="left:393px;top:460px;width:28px;padding-left:3px;"><span>M</span></div>
<div class="c" style="left:422px;top:460px;width:73px;letter-spacing:0.4px;"><span>ETIQUETA EN</span></div>
<div class="c" style="left:496px;top:460px;width:54px;background:#ffffe6;color:#0000ff;letter-spacing:0.4px;"><span>THEIS</span></div>
<div class="c r" style="left:551px;top:460px;width:28px;"><span>3.0</span></div>
<div class="c r" style="left:580px;top:460px;width:32px;"><span>360</span></div>
<div class="c r" style="left:613px;top:460px;width:46px;"><span>2,160.0</span></div>
<div class="c" style="left:660px;top:460px;width:28px;background:#ffffe6;letter-spacing:0.3px;"><span>CO</span></div>
<div class="c r" style="left:689px;top:460px;width:26px;"><span>1</span></div>
<div class="c r" style="left:716px;top:460px;width:30px;"><span>6.00</span></div>
<div class="c r" style="left:747px;top:460px;width:50px;"><span>5.7500</span></div>
<div class="c r" style="left:798px;top:460px;width:50px;"><span>4.6800</span></div>
<div class="c r" style="left:849px;top:460px;width:50px;color:#800000;"><span>5.8399</span></div>
<div class="c r" style="left:900px;top:460px;width:50px;background:#f0f0f0;"><span>4.6800</span></div>
<div class="c" style="left:951px;top:460px;width:38px;background:#f0f0f0;letter-spacing:0.3px;"><span>NO</span></div>
<div class="c" style="left:990px;top:460px;width:8px;background:#f0f0f0;"><span>A</span></div>
<div class="a" style="left:11px;top:477px;width:12px;height:19px;background:#000"></div>
<div class="ri" style="top:478px"></div>
<div class="a" style="left:23px;top:495px;width:975px;height:1px;background:#c0c0c0"></div>
<div class="c" style="left:23px;top:478px;width:68px;background:#ffffe6;"><span>011406226</span></div>
<div class="c" style="left:92px;top:478px;width:68px;background:#ffffe6;"><span>011413952</span></div>
<div class="c" style="left:161px;top:478px;width:56px;color:#800080;letter-spacing:0.55px;"><span>AGROEJ</span></div>
<div class="c" style="left:218px;top:478px;width:83px;letter-spacing:0.4px;"><span>PTO AMARILLO CW</span></div>
<div class="c" style="left:302px;top:478px;width:66px;letter-spacing:0.27px;"><span>GRANEL 5 KG</span></div>
<div class="c" style="left:369px;top:478px;width:23px;"><span>1ª</span></div>
<div class="c" style="left:393px;top:478px;width:28px;padding-left:7px;"><span>GG</span></div>
<div class="c" style="left:422px;top:478px;width:73px;letter-spacing:0.4px;"><span>/ ETIQUETA</span></div>
<div class="c" style="left:496px;top:478px;width:54px;background:#ffffe6;color:#0000ff;letter-spacing:0.4px;"><span>THEIS</span></div>
<div class="c r" style="left:551px;top:478px;width:28px;"><span>1.0</span></div>
<div class="c r" style="left:580px;top:478px;width:32px;"><span>88</span></div>
<div class="c r" style="left:613px;top:478px;width:46px;"><span>440.0</span></div>
<div class="c" style="left:660px;top:478px;width:28px;background:#ffffe6;letter-spacing:0.3px;"><span>CO</span></div>
<div class="c r" style="left:689px;top:478px;width:26px;"><span>1</span></div>
<div class="c r" style="left:716px;top:478px;width:30px;"><span>5.00</span></div>
<div class="c r" style="left:747px;top:478px;width:50px;"><span>6.5000</span></div>
<div class="c r" style="left:798px;top:478px;width:50px;"><span>5.0000</span></div>
<div class="c r" style="left:849px;top:478px;width:50px;color:#800000;"><span>6.5749</span></div>
<div class="c r" style="left:900px;top:478px;width:50px;background:#f0f0f0;"><span>5.0000</span></div>
<div class="c" style="left:951px;top:478px;width:38px;background:#f0f0f0;letter-spacing:0.3px;"><span>NO</span></div>
<div class="c" style="left:990px;top:478px;width:8px;background:#f0f0f0;"><span>A</span></div>
<div class="a" style="left:11px;top:495px;width:12px;height:19px;background:#000"></div>
<div class="ri" style="top:496px"></div>
<div class="a" style="left:23px;top:513px;width:975px;height:1px;background:#c0c0c0"></div>
<div class="c" style="left:23px;top:496px;width:68px;background:#ffffe6;"><span>011406226</span></div>
<div class="c" style="left:92px;top:496px;width:68px;background:#ffffe6;"><span>011413952</span></div>
<div class="c" style="left:161px;top:496px;width:56px;color:#800080;letter-spacing:0.55px;"><span>AGROEJ</span></div>
<div class="c" style="left:218px;top:496px;width:83px;letter-spacing:0.4px;"><span>PTO ROJO CW</span></div>
<div class="c" style="left:302px;top:496px;width:66px;letter-spacing:0.27px;"><span>GRANEL 5 KG</span></div>
<div class="c" style="left:369px;top:496px;width:23px;"><span>1ª</span></div>
<div class="c" style="left:393px;top:496px;width:28px;padding-left:7px;"><span>GG</span></div>
<div class="c" style="left:422px;top:496px;width:73px;letter-spacing:0.4px;"><span>/ ETIQUETA</span></div>
<div class="c" style="left:496px;top:496px;width:54px;background:#ffffe6;color:#0000ff;letter-spacing:0.4px;"><span>THEIS</span></div>
<div class="c r" style="left:551px;top:496px;width:28px;"><span>1.0</span></div>
<div class="c r" style="left:580px;top:496px;width:32px;"><span>88</span></div>
<div class="c r" style="left:613px;top:496px;width:46px;"><span>440.0</span></div>
<div class="c" style="left:660px;top:496px;width:28px;background:#ffffe6;letter-spacing:0.3px;"><span>CO</span></div>
<div class="c r" style="left:689px;top:496px;width:26px;"><span>1</span></div>
<div class="c r" style="left:716px;top:496px;width:30px;"><span>5.00</span></div>
<div class="c r" style="left:747px;top:496px;width:50px;"><span>6.5000</span></div>
<div class="c r" style="left:798px;top:496px;width:50px;"><span>5.0000</span></div>
<div class="c r" style="left:849px;top:496px;width:50px;color:#800000;"><span>6.5749</span></div>
<div class="c r" style="left:900px;top:496px;width:50px;background:#f0f0f0;"><span>5.0000</span></div>
<div class="c" style="left:951px;top:496px;width:38px;background:#f0f0f0;letter-spacing:0.3px;"><span>NO</span></div>
<div class="c" style="left:990px;top:496px;width:8px;background:#f0f0f0;"><span>A</span></div>
<div class="a" style="left:11px;top:513px;width:12px;height:19px;background:#000"></div>
<div class="ri" style="top:514px"></div>
<div class="a" style="left:23px;top:531px;width:975px;height:1px;background:#c0c0c0"></div>
<div class="c" style="left:23px;top:514px;width:68px;background:#ffffe6;"><span>011406226</span></div>
<div class="c" style="left:92px;top:514px;width:68px;background:#ffffe6;"><span>011413952</span></div>
<div class="c" style="left:161px;top:514px;width:56px;color:#800080;letter-spacing:0.55px;"><span>AGROEJ</span></div>
<div class="c" style="left:218px;top:514px;width:83px;letter-spacing:0.4px;"><span>PTO TRICOLOR</span></div>
<div class="c" style="left:302px;top:514px;width:66px;letter-spacing:0.27px;"><span>FLOW PACK</span></div>
<div class="c" style="left:369px;top:514px;width:23px;"><span>1ª</span></div>
<div class="c" style="left:393px;top:514px;width:28px;"><span></span></div>
<div class="c" style="left:422px;top:514px;width:73px;padding-left:10px;letter-spacing:0.4px;"><span>ETIQ ALEMAN</span></div>
<div class="c" style="left:496px;top:514px;width:54px;background:#ffffe6;color:#0000ff;letter-spacing:0.4px;"><span>THEIS</span></div>
<div class="c r" style="left:551px;top:514px;width:28px;"><span>0.5</span></div>
<div class="c r" style="left:580px;top:514px;width:32px;"><span>44</span></div>
<div class="c r" style="left:613px;top:514px;width:46px;"><span>220.0</span></div>
<div class="c" style="left:660px;top:514px;width:28px;background:#ffffe6;letter-spacing:0.3px;"><span>CO</span></div>
<div class="c r" style="left:689px;top:514px;width:26px;"><span>1</span></div>
<div class="c r" style="left:716px;top:514px;width:30px;"><span>5.00</span></div>
<div class="c r" style="left:747px;top:514px;width:50px;"><span>7.0000</span></div>
<div class="c r" style="left:798px;top:514px;width:50px;"><span>5.5000</span></div>
<div class="c r" style="left:849px;top:514px;width:50px;color:#800000;"><span>7.0749</span></div>
<div class="c r" style="left:900px;top:514px;width:50px;background:#f0f0f0;"><span>5.5000</span></div>
<div class="c" style="left:951px;top:514px;width:38px;background:#f0f0f0;letter-spacing:0.3px;"><span>NO</span></div>
<div class="c" style="left:990px;top:514px;width:8px;background:#f0f0f0;"><span>A</span></div>
<div class="a" style="left:91px;top:262px;width:1px;height:260px;background:#c0c0c0"></div>
<div class="a" style="left:160px;top:262px;width:1px;height:260px;background:#c0c0c0"></div>
<div class="a" style="left:217px;top:262px;width:1px;height:260px;background:#c0c0c0"></div>
<div class="a" style="left:301px;top:262px;width:1px;height:260px;background:#c0c0c0"></div>
<div class="a" style="left:368px;top:262px;width:1px;height:260px;background:#c0c0c0"></div>
<div class="a" style="left:392px;top:262px;width:1px;height:260px;background:#c0c0c0"></div>
<div class="a" style="left:421px;top:262px;width:1px;height:260px;background:#c0c0c0"></div>
<div class="a" style="left:495px;top:262px;width:1px;height:260px;background:#c0c0c0"></div>
<div class="a" style="left:550px;top:262px;width:1px;height:260px;background:#c0c0c0"></div>
<div class="a" style="left:579px;top:262px;width:1px;height:260px;background:#c0c0c0"></div>
<div class="a" style="left:612px;top:262px;width:1px;height:260px;background:#c0c0c0"></div>
<div class="a" style="left:659px;top:262px;width:1px;height:260px;background:#c0c0c0"></div>
<div class="a" style="left:688px;top:262px;width:1px;height:260px;background:#c0c0c0"></div>
<div class="a" style="left:715px;top:262px;width:1px;height:260px;background:#c0c0c0"></div>
<div class="a" style="left:746px;top:262px;width:1px;height:260px;background:#c0c0c0"></div>
<div class="a" style="left:797px;top:262px;width:1px;height:260px;background:#c0c0c0"></div>
<div class="a" style="left:848px;top:262px;width:1px;height:260px;background:#c0c0c0"></div>
<div class="a" style="left:899px;top:262px;width:1px;height:260px;background:#c0c0c0"></div>
<div class="a" style="left:950px;top:262px;width:1px;height:260px;background:#c0c0c0"></div>
<div class="a" style="left:989px;top:262px;width:1px;height:260px;background:#c0c0c0"></div>
<div class="a" style="left:998px;top:262px;width:1px;height:260px;background:#c0c0c0"></div>
<svg class="a" style="left:12px;top:262px" width="11" height="17" viewBox="0 0 11 17"><path d="M1.900 2.600 L8.400 8.500 L1.900 14.400 Z" fill="#000"/></svg>
<div class="a" style="left:998px;top:243px;width:18px;height:280px;background:#f0f0f0"></div>
<svg class="a" style="left:1001px;top:248px" width="12" height="9" viewBox="0 0 12 9"><path d="M2.3 7 L5.6 3.400 L8.900 7" stroke="#606060" stroke-width="2" fill="none"/></svg>
<div class="a" style="left:1000px;top:261px;width:14px;height:17px;background:#cdcdcd"></div>
<svg class="a" style="left:0;top:0" width="1028" height="522" viewBox="0 0 1028 522"><path d="M904.800 523 C901.800 511 899.700 502 899.600 490 L899.200 292 L899.800 258 C900.200 247 902.400 240 909 240 L943.500 240 C948.500 240 949.800 247 950.300 258 L951 270 L952.7 380 L952.7 495 C952.7 506 951.5 515 949 523" stroke="#e81c28" stroke-width="3.300" fill="none" stroke-linejoin="round"/></svg>
<div class="a" style="left:1027px;top:39px;width:1px;height:6px;background:#606060"></div>
<div class="a" style="left:1027px;top:204px;width:1px;height:7px;background:#500060"></div>
<div class="a" style="left:1027px;top:211px;width:1px;height:25px;background:#505050"></div>
<div class="a" style="left:1027px;top:242px;width:1px;height:13px;background:#505050"></div>
<div class="a" style="left:1027px;top:258px;width:1px;height:49px;background:#505050"></div>
<div class="a" style="left:1027px;top:320px;width:1px;height:1px;background:#707070"></div>
<div class="a" style="left:1027px;top:334px;width:1px;height:1px;background:#707070"></div>
<div class="a" style="left:1027px;top:372px;width:1px;height:1px;background:#707070"></div>
<div class="a" style="left:1027px;top:392px;width:1px;height:1px;background:#707070"></div>
<div class="a" style="left:1027px;top:422px;width:1px;height:23px;background:#2878d8"></div>
<div class="a" style="left:1027px;top:416px;width:1px;height:1px;background:#804040"></div>
<div class="a" style="left:1027px;top:459px;width:1px;height:1px;background:#804040"></div>
<div class="a" style="left:1027px;top:477px;width:1px;height:1px;background:#804040"></div>
<div class="a" style="left:1027px;top:494px;width:1px;height:1px;background:#804040"></div>
<div class="a" style="left:1027px;top:513px;width:1px;height:1px;background:#804040"></div>
</body></html>
